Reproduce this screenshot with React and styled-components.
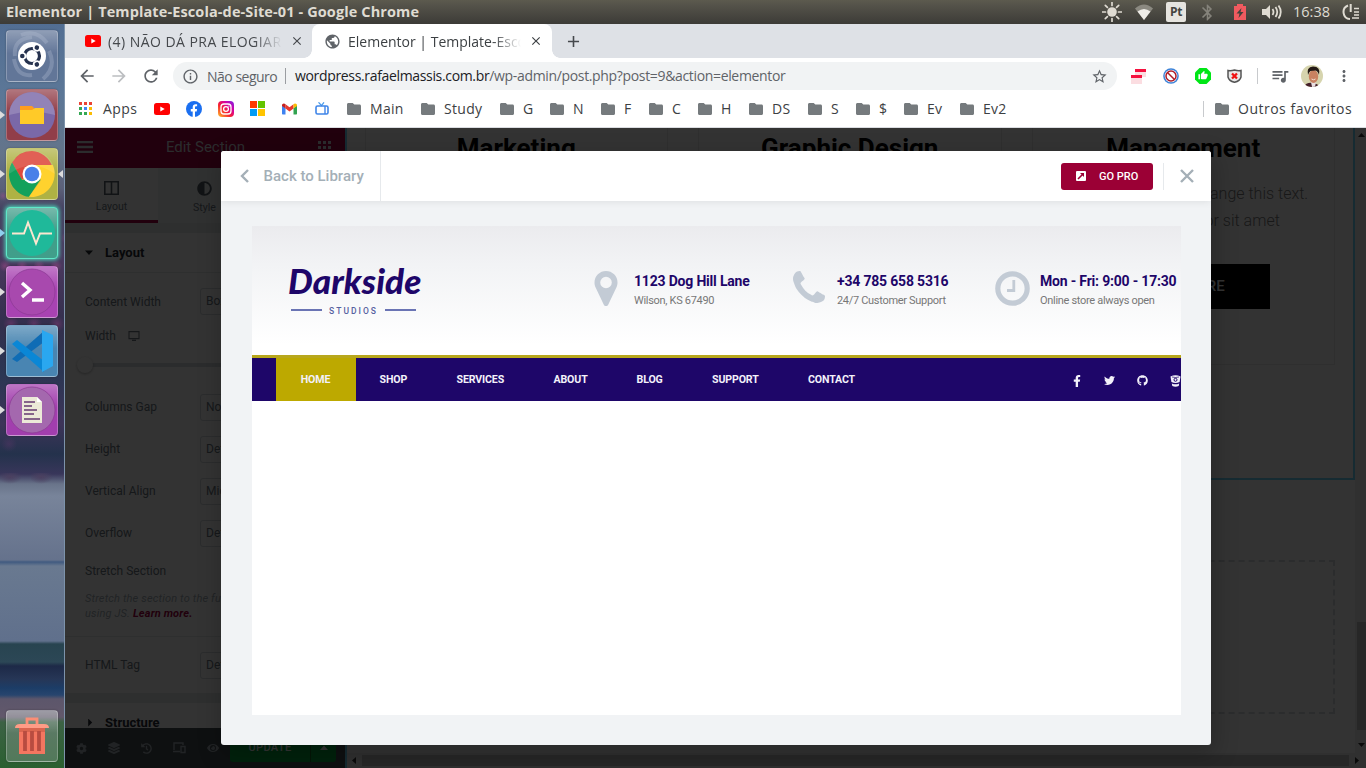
import React from "react";
import styled, { createGlobalStyle, css } from "styled-components";
import {
  MdArrowBack, MdArrowForward, MdRefresh, MdInfoOutline, MdStarBorder,
  MdClose, MdAdd, MdMoreVert, MdPublic, MdQueueMusic, MdBluetooth, MdThumbUp,
} from "react-icons/md";
import { FaFacebookF, FaTwitter, FaLayerGroup, FaCog, FaHistory, FaEye, FaAdjust, FaGithub } from "react-icons/fa";

const Global = createGlobalStyle`
  * { box-sizing: border-box; }
  html, body { margin: 0; padding: 0; overflow: hidden; }
  svg { display: block; flex: none; }
`;

const ui = `"Open Sans", "Noto Sans", sans-serif`;
const roboto = `Roboto, "Liberation Sans", sans-serif`;

const Desktop = styled.div`
  width: 1366px;
  height: 768px;
  display: flex;
  flex-direction: column;
  overflow: hidden;
  font-family: ${ui};
  white-space: nowrap;
`;

/* ---------- system bar ---------- */
const SystemBar = styled.header`
  height: 24px;
  flex: none;
  display: flex;
  align-items: center;
  padding: 0 5px 0 6px;
  background: linear-gradient(#5c5a4e, #55534a 20%, #3c3b37);
  color: #dfdbd2;
`;
const WindowTitle = styled.div`
  flex: 1;
  font-weight: 700;
  font-size: 14.5px;
  letter-spacing: 0.11px;
  line-height: 22px;
`;
const Indicator = styled.div`
  width: ${(p) => p.$w}px;
  display: flex;
  align-items: center;
  font-size: 14.5px;
  line-height: 22px;
`;
const KeyboardBadge = styled.span`
  width: 20px;
  height: 20px;
  border-radius: 2px;
  background: #e6e4df;
  color: #45443f;
  font: 700 12px/20px ${ui};
  letter-spacing: -0.4px;
  text-align: center;
`;

/* ---------- launcher ---------- */
const Body = styled.div`
  flex: 1;
  min-height: 0;
  display: flex;
`;
const Launcher = styled.nav`
  width: 65px;
  flex: none;
  display: flex;
  flex-direction: column;
  gap: 7px;
  padding: 6px 0 6px;
  border-right: 1px solid #7d93ab;
  background:
    radial-gradient(circle at 3px 4px, rgba(150, 80, 140, 0.55), transparent 5px) 0 168px / 13px 60px repeat-x,
    radial-gradient(circle at 6px 9px, rgba(150, 70, 130, 0.5), transparent 6px) 4px 205px / 19px 90px repeat-x,
    radial-gradient(circle at 5px 6px, rgba(165, 75, 140, 0.5), transparent 6px) 0 236px / 17px 60px repeat-x,
    radial-gradient(circle at 8px 8px, rgba(140, 60, 125, 0.45), transparent 8px) 3px 292px / 23px 60px repeat-x,
    radial-gradient(circle at 8px 8px, rgba(30, 60, 60, 0.4), transparent 8px) 5px 322px / 29px 60px repeat-x,
    radial-gradient(circle at 8px 8px, rgba(100, 55, 110, 0.35), transparent 8px) 1px 412px / 27px 60px no-repeat,
    radial-gradient(ellipse at 10px 4px, #4b4060, transparent 12px) 0 449px / 31px 16px repeat-x,
    linear-gradient(#526e93 0, #5c7797 70px, #64748a 130px, #5b6078 165px, #454261 185px, #49385e 240px,
      #332f4d 300px, #2b3653 350px, #3d3459 400px, #24324c 430px, #38365a 450px, #69748a 460px, #78849a 472px,
      #65728c 536px, #405a80 538px, #697990 542px, #60708c 617px, #284450 620px, #2c4756 638px, #1d2947 642px,
      #263656 655px, #1c3d67 664px, #27456e 671px, #5c566b 675px, #62586b 693px, #3c6245 698px, #2a6030 744px);
`;
const LauncherRow = styled.div`
  height: 52px;
  display: flex;
  align-items: center;
  ${(p) => p.$end && css`margin-top: auto;`}
`;
const Pip = styled.i`
  width: 5px;
  margin-right: 1px;
  height: 8px;
  flex: none;
  background: ${(p) => p.$color || "transparent"};
  clip-path: ${(p) => (p.$left ? "polygon(100% 0, 100% 100%, 0 50%)" : "polygon(0 0, 100% 50%, 0 100%)")};
`;
const LauncherTile = styled.div`
  width: 52px;
  height: 52px;
  flex: none;
  border-radius: 4px;
  border: 1px solid ${(p) => p.$edge || "rgba(255,255,255,.25)"};
  display: flex;
  align-items: center;
  justify-content: center;
  background: linear-gradient(rgba(255, 255, 255, 0.3), rgba(255, 255, 255, 0.02) 45%), ${(p) => p.$bg};
  box-shadow: ${(p) => (p.$glow ? "0 0 4px 1px #4fe0c0" : "0 0 2px rgba(0,0,0,.3)")};
  overflow: hidden;
`;

/* ---------- browser chrome ---------- */
const Browser = styled.main`
  flex: 1;
  min-width: 0;
  display: flex;
  flex-direction: column;
  background: #fff;
`;
const TabStrip = styled.div`
  height: 34px;
  flex: none;
  display: flex;
  background: #dee1e6;
  color: #45484c;
`;
const Tab = styled.div`
  width: ${(p) => p.$w}px;
  display: flex;
  align-items: center;
  padding-left: ${(p) => p.$pad}px;
  font-size: 14px;
  letter-spacing: ${(p) => p.$ls || 0}px;
  ${(p) =>
    p.$active &&
    css`
      position: relative;
      background: #fff;
      border-radius: 8px 8px 0 0;
      color: #3c4043;
      &::before,
      &::after {
        content: "";
        position: absolute;
        bottom: 0;
        width: 8px;
        height: 8px;
      }
      &::before {
        left: -8px;
        background: radial-gradient(circle at 0 0, transparent 7.5px, #fff 8px);
      }
      &::after {
        right: -8px;
        background: radial-gradient(circle at 100% 0, transparent 7.5px, #fff 8px);
      }
    `}
`;
const TabTitle = styled.span`
  width: ${(p) => p.$w}px;
  margin: 0 8px 0 7px;
  overflow: hidden;
  mask-image: linear-gradient(90deg, #000 calc(100% - 28px), transparent);
`;
const NewTab = styled.div`
  display: flex;
  align-items: center;
  padding-left: 12px;
`;
const Toolbar = styled.div`
  height: 36px;
  flex: none;
  display: flex;
  align-items: center;
  padding-left: 12px;
  color: #5f6368;
`;
const Slot = styled.span`
  width: ${(p) => p.$w}px;
  flex: none;
  display: flex;
  align-items: center;
  color: ${(p) => p.$color || "inherit"};
`;
const AddressBar = styled.div`
  width: 944px;
  height: 28px;
  margin-right: 14px;
  flex: none;
  display: flex;
  align-items: center;
  padding: 0 9px;
  border-radius: 14px;
  background: #f1f3f4;
  font-size: 14px;
`;
const Insecure = styled.span`
  width: 78px;
  margin-left: 8px;
  letter-spacing: -0.5px;
`;
const Url = styled.span`
  flex: 1;
  padding-left: 9px;
  line-height: 16px;
  border-left: 1px solid #9a9da1;
  letter-spacing: -0.34px;
  b { font-weight: 400; color: #202124; }
`;
const Divider = styled.i`
  width: 1px;
  height: 16px;
  flex: none;
  background: #c8cacd;
`;
const Bookmarks = styled.div`
  height: 34px;
  flex: none;
  display: flex;
  align-items: center;
  padding: 0 0 4px 14px;
  border-bottom: 1px solid #dadce0;
  color: #3c4043;
  font-size: 14px;
`;
const Bookmark = styled.span`
  width: ${(p) => p.$w}px;
  flex: none;
  display: flex;
  align-items: center;
  gap: ${(p) => p.$gap ?? 7}px;
  letter-spacing: ${(p) => p.$ls || 0}px;
  svg { margin-left: ${(p) => p.$shift || 0}px; }
`;
const Spring = styled.span`
  flex: 1;
`;

/* ---------- page under the dialog ---------- */
const Page = styled.div`
  position: relative;
  height: 640px;
  flex: none;
  display: flex;
  font-family: ${roboto};
  overflow: hidden;
`;
const Panel = styled.aside`
  width: 280px;
  flex: none;
  display: flex;
  flex-direction: column;
  background: #fff;
  font-size: 12px;
  color: #6d7882;
`;
const PanelHeader = styled.div`
  height: 40px;
  flex: none;
  display: flex;
  align-items: center;
  justify-content: space-between;
  padding: 0 14px 2px 12px;
  background: #a50040;
  color: #d5dadf;
  font-size: 15px;
`;
const PanelTabs = styled.div`
  height: 55px;
  flex: none;
  display: flex;
  background: #f1f3f5;
`;
const PanelTab = styled.div`
  width: 93px;
  display: flex;
  flex-direction: column;
  align-items: center;
  justify-content: center;
  gap: 5px;
  padding-top: 6px;
  font-size: 10.5px;
  background: ${(p) => (p.$active ? "#fff" : "#f1f3f5")};
  border-bottom: ${(p) => (p.$active ? "3px solid #a50040" : "3px solid transparent")};
`;
const PanelBody = styled.div`
  flex: 1;
  min-height: 0;
  display: flex;
  flex-direction: column;
  overflow: hidden;
`;
const Band = styled.div`
  height: 10px;
  flex: none;
  background: #e6e9ec;
`;
const SectionTitle = styled.div`
  height: 40px;
  flex: none;
  display: flex;
  align-items: center;
  padding-left: 20px;
  gap: 13px;
  font-weight: 700;
  font-size: 13px;
  color: #262c33;
  border-bottom: 1px solid #e6e9ec;
`;
const Triangle = styled.i`
  width: 8px;
  height: 8px;
  margin-right: -1px;
  background: currentColor;
  clip-path: ${(p) => (p.$right ? "polygon(40% 0, 90% 50%, 40% 100%)" : "polygon(0 25%, 100% 25%, 50% 80%)")};
`;
const Control = styled.div`
  height: ${(p) => p.$h}px;
  flex: none;
  display: flex;
  align-items: center;
  padding-left: 20px;
  gap: ${(p) => p.$gap || 0}px;
`;
const ControlLabel = styled.span`
  width: ${(p) => p.$w || 115}px;
`;
const Select = styled.span`
  width: 125px;
  height: 27px;
  padding-left: 5px;
  line-height: 25px;
  border: 1px solid #d5dadf;
  border-radius: 3px;
`;
const SliderTrack = styled.div`
  height: 4px;
  margin: 21px 20px 19px;
  flex: none;
  display: flex;
  align-items: center;
  background: #d5dadf;
  &::before {
    content: "";
    width: 16px;
    height: 16px;
    margin-left: -8px;
    border-radius: 50%;
    background: #fff;
    box-shadow: 0 1px 3px rgba(0, 0, 0, 0.3);
  }
`;
const Hint = styled.div`
  height: 49px;
  flex: none;
  padding: 3px 0 0 20px;
  font: italic 11px/15px ${roboto};
  letter-spacing: 0.16px;
  color: #a4afb7;
  border-bottom: 1px solid #e6e9ec;
  b { color: #a50040; }
`;
const PanelFooter = styled.div`
  height: 40px;
  flex: none;
  display: flex;
  align-items: center;
  gap: 21px;
  padding-left: 11px;
  background: #495157;
  color: #a4afb7;
`;
const UpdateButton = styled.div`
  width: 106px;
  height: 28px;
  margin-left: -10px;
  display: flex;
  align-items: center;
  border-radius: 3px;
  background: #00aa3c;
  color: #fff;
  font-weight: 500;
  font-size: 11px;
  span { width: 81px; text-align: center; border-right: 1px solid #146b22; line-height: 28px; letter-spacing: 0.4px; }
  i { margin-left: 9px; transform: scaleY(-1); }
`;
const Canvas = styled.div`
  flex: 1;
  min-width: 0;
  display: flex;
  flex-direction: column;
  border-left: 2px solid #71d7f7;
  background: #fff;
`;
const Section = styled.section`
  width: 1008px;
  height: 352px;
  flex: none;
  display: flex;
  gap: 30px;
  padding-left: 17.5px;
  border: solid #71d7f7;
  border-width: 0 2px 2px 0;
`;
const Card = styled.article`
  width: 303.5px;
  height: 237px;
  flex: none;
  display: flex;
  flex-direction: column;
  align-items: center;
  padding-top: 3px;
  border: 1px solid #e9e9e9;
  border-top: 0;
  color: #7a7a7a;
  font-weight: 300;
  font-size: 16px;
  line-height: 27px;
  h2 { margin: 0 0 14px; font: 700 26px/35px ${roboto}; color: #000; }
  p { margin: 0; }
`;
const ReadMore = styled.span`
  width: 174px;
  height: 45px;
  margin-top: 30px;
  background: #000;
  color: #fff;
  font: 500 15px/45px ${roboto};
  text-align: center;
`;
const DropArea = styled.div`
  width: 970px;
  height: 154px;
  margin: 80px 0 0 18px;
  border: 2px dashed #d5dadf;
`;
const CanvasRow = styled.div`
  flex: 1;
  display: flex;
`;
const VScroll = styled.div`
  width: 11px;
  flex: none;
  display: flex;
  flex-direction: column;
  align-items: center;
  padding: 5px 0 6px 2px;
  background: #efefef;
`;
const VThumb = styled.i`
  width: 9px;
  height: 108px;
  margin: auto 0 13px;
  background: #c4c4c4;
`;
const HScroll = styled.div`
  height: 15px;
  flex: none;
  display: flex;
  align-items: center;
  gap: 4px;
  padding: 0 3px;
  background: #efefef;
`;
const HThumb = styled.i`
  width: 987px;
  height: 11px;
  background: #c4c4c4;
`;
const Arrow = styled.i`
  width: ${(p) => (p.$dir === "up" || p.$dir === "down" ? 7 : 4)}px;
  height: ${(p) => (p.$dir === "up" || p.$dir === "down" ? 4 : 7)}px;
  margin: 0 2px;
  background: #333;
  clip-path: ${(p) =>
    ({
      up: "polygon(50% 0, 100% 100%, 0 100%)",
      down: "polygon(0 0, 100% 0, 50% 100%)",
      left: "polygon(100% 0, 100% 100%, 0 50%)",
      right: "polygon(0 0, 100% 50%, 0 100%)",
    })[p.$dir]};
`;

/* ---------- library dialog ---------- */
const Overlay = styled.div`
  position: absolute;
  inset: 0;
  padding: 23px 0 0 156px;
  background: rgba(0, 0, 0, 0.8);
`;
const Dialog = styled.div`
  width: 990px;
  height: 594px;
  display: flex;
  flex-direction: column;
  border-radius: 3px;
  background: #f1f3f5;
  box-shadow: 2px 8px 23px 3px rgba(0, 0, 0, 0.2);
  overflow: hidden;
`;
const DialogHeader = styled.div`
  height: 50px;
  flex: none;
  display: flex;
  align-items: center;
  background: #fff;
  box-shadow: 0 0 8px rgba(0, 0, 0, 0.1);
  z-index: 1;
  color: #a4afb7;
`;
const BackLink = styled.div`
  width: 160px;
  height: 50px;
  display: flex;
  align-items: center;
  padding-left: 19px;
  gap: 13.5px;
  border-right: 1px solid #e6e9ec;
  font-weight: 500;
  font-size: 15px;
`;
const GoPro = styled.div`
  width: 92px;
  height: 27px;
  display: flex;
  align-items: center;
  gap: 13px;
  padding-left: 15px;
  border-radius: 3px;
  background: #9b0035;
  color: #fff;
  font-weight: 500;
  font-size: 11px;
`;
const CloseCell = styled.div`
  width: 48px;
  height: 27px;
  margin-left: 10px;
  padding-left: 16px;
  display: flex;
  align-items: center;
  border-left: 1px solid #e6e9ec;
`;
const Preview = styled.div`
  width: 929px;
  height: 489px;
  margin: 25px 0 0 31px;
  background: #fff;
  overflow: hidden;
`;
const SiteHeader = styled.div`
  height: 129px;
  display: flex;
  background: linear-gradient(#ebebee, #f2f3f5 30%, #fff 92%);
`;
const Logo = styled.div`
  width: 342px;
  flex: none;
  padding: 33px 0 0 36px;
  color: #1e0669;
`;
const LogoName = styled.div`
  font: italic 900 35px/42px Lato, ${roboto};
  letter-spacing: 0.1px;
`;
const LogoTag = styled.div`
  width: 125px;
  margin: 4px 0 0 3px;
  display: flex;
  align-items: center;
  justify-content: space-between;
  font: 500 8.5px/12px ${roboto};
  letter-spacing: 2px;
  color: #5560a0;
  &::before,
  &::after {
    content: "";
    width: 31px;
    height: 2px;
    margin-bottom: 3px;
    background: #6a74b4;
  }
`;
const Contact = styled.div`
  display: flex;
  flex: none;
  width: ${(p) => p.$w}px;
  padding-top: 45px;
`;
const ContactIcon = styled.span`
  width: ${(p) => p.$w}px;
  flex: none;
`;
const ContactText = styled.div`
  margin-top: 1px;
  font-size: 11px;
  line-height: 19px;
  letter-spacing: -0.31px;
  color: #777;
  strong { display: block; font-size: 14px; line-height: 19px; letter-spacing: -0.19px; color: #1e0669; }
`;
const SiteNav = styled.div`
  height: 46px;
  display: flex;
  align-items: center;
  padding-left: 23.5px;
  border-top: 3px solid #b8a71c;
  background: #1e0669;
  color: #f3f1fa;
  font-weight: 700;
  font-size: 10.6px;
`;
const NavItem = styled.span`
  width: ${(p) => p.$w}px;
  flex: none;
  height: 43px;
  line-height: 43px;
  letter-spacing: -0.13px;
  ${(p) => p.$active && css`background: #bda900; text-align: center; margin-right: 24px;`}
`;
const Socials = styled.div`
  margin: 2px -11px 0 auto;
  display: flex;
  align-items: center;
`;
const SocialLink = styled.span`
  width: 33px;
  display: flex;
  justify-content: center;
`;

/* ---------- drawings ---------- */
const Svg = ({ w, h = w, vb, children }) => (
  <svg width={w} height={h} viewBox={vb || `0 0 ${w} ${h}`} fill="none">{children}</svg>
);
const YouTube = () => (
  <Svg w={16} h={12}><rect width="16" height="12" rx="2.5" fill="#f00" /><path d="M6.3 3.6 10.7 6 6.3 8.4z" fill="#fff" /></Svg>
);
const AppsGrid = ({ colors, s = 13 }) => (
  <Svg w={s} vb="0 0 13 13">
    {[0, 1, 2].map((r) => [0, 1, 2].map((c) => <rect key={`${r}${c}`} x={c * 5} y={r * 5} width="3" height="3" fill={colors[r * 3 + c] || colors[0]} />))}
  </Svg>
);
const Facebook = () => (
  <Svg w={16}><circle cx="8" cy="8" r="8" fill="#1b6ff0" /><path d="M6.7 16v-5.6H4.8V8h1.9V6.2c0-2 1.1-3 2.9-3l1.5.1v2h-.9c-.9 0-1.2.5-1.2 1.1V8h2.1l-.4 2.4H9V16z" fill="#fff" /></Svg>
);
const Instagram = () => (
  <Svg w={16}>
    <defs><linearGradient id="ig" x1="0" y1="1" x2="1" y2="0"><stop stopColor="#ffc02e" /><stop offset=".4" stopColor="#f7222f" /><stop offset=".7" stopColor="#d300a5" /><stop offset="1" stopColor="#7a28e8" /></linearGradient></defs>
    <rect width="16" height="16" rx="4" fill="url(#ig)" /><rect x="3" y="3" width="10" height="10" rx="3" stroke="#fff" strokeWidth="1.3" /><circle cx="8" cy="8" r="2.4" stroke="#fff" strokeWidth="1.3" /><circle cx="10.9" cy="5.1" r=".7" fill="#fff" />
  </Svg>
);
const Microsoft = () => (
  <Svg w={15}><path d="M0 0h7v7H0z" fill="#ff3a00" /><path d="M8 0h7v7H8z" fill="#62c400" /><path d="M0 8h7v7H0z" fill="#009bf5" /><path d="M8 8h7v7H8z" fill="#ffc400" /></Svg>
);
const Gmail = () => (
  <Svg w={15} h={12}>
    <path d="M0 2.5 3.5 5v6.500H1c-.6 0-1-.4-1-1z" fill="#3e82f1" /><path d="M15 2.5 11.500 5v6.500H14c.6 0 1-.4 1-1z" fill="#31a350" />
    <path d="M3.500 1.200 7.500 4.300l4-3.100v4.300l-4 3-4-3z" fill="#e8382d" />
    <path d="M11.500 1.200C13 0 15 .6 15 2.500V3l-3.500 2.500z" fill="#fbbc04" /><path d="M3.500 1.200C2 0 0 .6 0 2.500V3l3.500 2.500z" fill="#c5221f" />
  </Svg>
);
const TvIcon = () => (
  <Svg w={14} h={13}><path d="M3.500.3 6.500 3.500 9 .3" stroke="#4a9bea" strokeWidth="1.2" /><rect x="1" y="4" width="12" height="8" rx="1.500" stroke="#3f85e8" strokeWidth="1.600" /><path d="M10 4v8" stroke="#3f85e8" strokeWidth="1.400" /></Svg>
);
const Sun = () => (
  <Svg w={20}><circle cx="10" cy="10" r="4.800" fill="#dfdbd2" />{[0, 45, 90, 135, 180, 225, 270, 315].map((a) => <path key={a} d="M10 .5v3" stroke="#dfdbd2" strokeWidth="1.700" strokeLinecap="round" transform={`rotate(${a} 10 10)`} />)}</Svg>
);
const Wifi = () => (
  <Svg w={18} h={16}><path d="M9 16 0 4.500Q9-3.500 18 4.500z" fill="#8b8981" /><path d="M9 16 2.500 7.500q6.500-5 13 0z" fill="#efede8" /></Svg>
);
const Battery = () => (
  <Svg w={12} h={16}><path d="M3 0h6v2h3v14H0V2h3z" fill="#f05a5f" /><path d="M7.500 4 2.500 9.500h3L4.500 14 9.500 8h-3z" fill="#43423c" /></Svg>
);
const Volume = () => (
  <Svg w={20} h={16}><path d="M0 5h4l4-4v14l-4-4H0z" fill="#dfdbd2" /><path d="M10.500 5q2 3 0 6M13.500 3q3.500 5 0 10M16.500 1.500q4.500 6.500 0 13" stroke="#dfdbd2" strokeWidth="1.800" /></Svg>
);
const Session = () => (
  <Svg w={18} h={16}><path d="M6 1.500A7 7 0 0 0 8 15" stroke="#dfdbd2" strokeWidth="2" /><path d="M8.700 0v8" stroke="#dfdbd2" strokeWidth="2" /><path d="M12 4.500h5M12 8h5M12 11h5M10 14h7" stroke="#dfdbd2" strokeWidth="1.700" /></Svg>
);
const PhoneIcon = () => (
  <Svg w={32} vb="192 128 1408 1408"><path fill="#c3cbd5" d="M1600 1240q0 27-10 70.500t-21 68.500q-21 50-122 106-94 51-186 51-27 0-53-3.500t-57.500-12.500-47-14.500-55.500-20.500-49-18q-98-35-175-83-127-79-264-216t-216-264q-48-77-83-175-3-9-18-49t-20.500-55.500-14.500-47-12.500-57.500-3.500-53q0-92 51-186 56-101 106-122 25-11 68.500-21t70.500-10q14 0 21 3 18 6 53 76 11 19 30 54t35 63.500 31 53.500q3 4 17.500 25t21.500 35.500 7 28.500q0 20-28.500 50t-62 55-62 53-28.500 46q0 9 5 22.500t8.500 20.500 14 24 11.500 19q76 137 174 235t235 174q2 1 19 11.500t24 14 20.500 8.500 22.500 5q18 0 46-28.500t53-62 55-62 50-28.500q14 0 28.500 7t35.500 21.500 25 17.500q25 15 53.500 31t63.500 35 54 30q70 35 76 53 3 7 3 21z" /></Svg>
);
const PinIcon = () => (
  <Svg w={24} h={35}><path fillRule="evenodd" fill="#c3cbd5" d="M12 0a11.500 11.500 0 0 1 11.500 11.500c0 2-.4 3.300-1 4.700L14.300 33.500c-.9 2-3.700 2-4.600 0L1.500 16.200c-.6-1.400-1-2.700-1-4.700A11.500 11.500 0 0 1 12 0zm0 5.700a5.800 5.800 0 1 0 0 11.600 5.800 5.800 0 0 0 0-11.600z" /></Svg>
);
const ClockIcon = () => (
  <Svg w={35}><circle cx="17.500" cy="17.500" r="14.700" stroke="#c3cbd5" strokeWidth="5.200" /><path d="M18.800 9v10.500H12" stroke="#c3cbd5" strokeWidth="2.800" /></Svg>
);
const Bitbucket = () => (
  <Svg w={11} h={12}><path d="M.5 1.500Q5.500-.8 10.500 1.500L9.600 7q-4 2-8.200 0z" fill="#f3f1fa" /><path d="M1.800 8.500q3.700 1.700 7.400 0l-.5 2.500q-3.200 1.500-6.400 0z" fill="#f3f1fa" /><circle cx="5.500" cy="4.800" r="1.500" stroke="#1e0669" /><path d="M2 2q3.500 1 7 0" stroke="#1e0669" strokeWidth=".7" /></Svg>
);
const GoProIcon = () => (
  <Svg w={10}><rect width="10" height="10" rx="1" fill="#fff" /><path d="M2 8 6.500 3.500" stroke="#9b0035" strokeWidth="1.600" /><path d="M4 2h4v4z" fill="#9b0035" /></Svg>
);
const ExtBars = () => (
  <Svg w={15}><path d="M4 1h11v7H4z M0 7h11v8H0z" fill="#fbdde1" /><path d="M4 0h11v3H4zM0 6h11v3H0z" fill="#f5123f" /></Svg>
);
const ExtBlock = () => (
  <Svg w={16}><circle cx="8" cy="8" r="7.800" fill="#3d83d8" /><circle cx="8" cy="8" r="6.300" fill="#fff" /><circle cx="8" cy="8" r="5" stroke="#b01d28" strokeWidth="1.500" /><path d="m4.500 4.500 7 7" stroke="#b01d28" strokeWidth="1.500" /></Svg>
);
const ExtThumb = () => (
  <Svg w={16}><path d="M4.500 0h7L16 4.500v7L11.500 16h-7L0 11.500v-7z" fill="#00e616" /><g transform="translate(3 2.500) scale(.42)"><MdThumbUp size={24} color="#fff" /></g></Svg>
);
const ExtShield = () => (
  <Svg w={15} h={14}><path d="M1 1.500Q4 2 7.500 1 11 2 14 1.500V8q-1 4-6.500 5.300Q2 12 1 8z" fill="#e7e7e7" stroke="#555" strokeWidth="1.500" /><path d="m5 4.500 5 5m0-5-5 5" stroke="#f01414" strokeWidth="2.300" /></Svg>
);
const Avatar = () => (
  <Svg w={22}>
    <defs><clipPath id="av"><circle cx="11" cy="11" r="11" /></clipPath></defs>
    <g clipPath="url(#av)"><path d="M0 0h22v22H0z" fill="#d6d4ae" /><path d="M3 22q2-5 9-4 6 1 6 4z" fill="#45202a" /><path d="M10 17h5l-1 5h-3z" fill="#e9dfe0" /><ellipse cx="12.500" cy="11.500" rx="4.700" ry="6.500" fill="#c98261" /><path d="M7 10Q5 2 12 1.500 20 1.500 18 10 17 6 14.500 5.500L9.500 6Q8 7 7 10z" fill="#231815" /><path d="M10.500 14q2 1.500 4 0" stroke="#f4dcd0" /></g>
  </Svg>
);
const Hamburger = () => <Svg w={16} h={12}><path d="M0 1.200h16M0 6h16M0 10.800h16" stroke="#d5dadf" strokeWidth="2.300" /></Svg>;
const ColumnsIcon = () => <Svg w={15} h={14}><path d="M.8.8h13.400v12.400H.8zM7.500 1v12" stroke="#556068" strokeWidth="1.600" /></Svg>;
const Monitor = () => <Svg w={12} h={10}><path d="M1 .6h10v7H1zM4 9.400h4" stroke="#6d7882" strokeWidth="1.100" /></Svg>;
const Devices = () => <Svg w={13} h={12}><path d="M1 8V1h9v2M0 9.500h7M8 4.500h4v6H8z" stroke="#a4afb7" strokeWidth="1.400" /></Svg>;
const BackChevron = () => <Svg w={10} h={14}><path d="M8 1 2 7l6 6" stroke="#a4afb7" strokeWidth="2.400" /></Svg>;
const CloseX = () => <Svg w={14}><path d="m1 1 12 12M13 1 1 13" stroke="#a4afb7" strokeWidth="2.400" /></Svg>;

const UbuntuLogo = () => (
  <Svg w={50}>
    <path d="M8 25Q6 8 25 6M25 44Q10 46 7 28M42 20Q50 36 36 48M14 4Q30-2 40 12" stroke="#b9c3d8" strokeOpacity=".3" strokeWidth="4" />
    <circle cx="25" cy="25" r="14" fill="#fff" /><circle cx="25" cy="25" r="7.500" stroke="#26324e" strokeWidth="3.200" />
    {[60, 180, 300].map((a) => <g key={a} transform={`rotate(${a} 25 25)`}><circle cx="34.500" cy="25" r="3.800" fill="#fff" /><circle cx="34.700" cy="25" r="2.300" fill="#26324e" /></g>)}
  </Svg>
);
const Files = () => (
  <Svg w={50}><circle cx="25" cy="25" r="23" fill="#7a68a8" /><path d="M2 25A23 23 0 0 1 48 25Q25 18 2 25z" fill="#fff" opacity=".18" /><path d="M13 16h12l2 2v4H13z" fill="#ff9d20" /><path d="M13 20h12l3-2h9v16H13z" fill="#ffca28" /></Svg>
);
const Chrome = () => (
  <Svg w={50}>
    <path d="M25 2A23 23 0 0 0 5.100 13.500L15 31l10-14h20A23 23 0 0 0 25 2z" fill="#dd4b3e" />
    <path d="M5.100 13.500A23 23 0 0 0 22 47.800L33 31l-18 0z" fill="#12a15c" /><path d="M22 47.800A23 23 0 0 0 45.800 16H25l9 15z" fill="#ffd22e" />
    <circle cx="25" cy="25" r="9.500" fill="#fff" /><circle cx="25" cy="25" r="7.300" fill="#4a80e8" />
    <path d="M2 25A23 23 0 0 1 48 25Q25 8 2 25z" fill="#fff" opacity=".12" />
  </Svg>
);
const Pulse = () => (
  <Svg w={50}><circle cx="25" cy="25" r="23" fill="#1fb99a" /><path d="M5 25.500h12l4-11 8 21 4-10h12" stroke="#fbe6cf" strokeWidth="2" /></Svg>
);
const Terminal = () => (
  <Svg w={50}><circle cx="25" cy="25" r="23" fill="#a849ae" stroke="#8b3b93" strokeWidth=".7" /><path d="m15 16 8 7-8 7" stroke="#fff" strokeWidth="3.400" /><path d="M25 33h12" stroke="#fff" strokeWidth="3.600" /></Svg>
);
const Code = () => (
  <Svg w={50}><path d="m5 33 32-28v11L10 36z" fill="#0f6cb5" /><path d="m5 18 5-4 27 21v11z" fill="#0a87d6" /><path d="M35 4l11 5v31l-11 6z" fill="#2aa7f0" /></Svg>
);
const Doc = () => (
  <Svg w={50}><circle cx="25" cy="25" r="23" fill="#a468ae" stroke="#8b3b93" strokeWidth=".7" /><path d="M15 12h15l5 5v21H15z" fill="#ecead8" /><path d="M30 12v5h5z" fill="#fff" /><path d="M17 17h11M17 21h8M17 25h13M17 29h10M17 34h16" stroke="#86658a" strokeWidth="2" /></Svg>
);
const Trash = () => (
  <Svg w={50}><path d="M20 13V8h10v5" stroke="#fb8e76" strokeWidth="2.800" /><path d="M8 17q0-4 5-4h24q5 0 5 4z" fill="#ff9c86" /><path d="M12 17h26v26H12z" fill="#f47660" /><path d="M12 17h26v4H12z" fill="#d9654f" /><path d="M18 20v20M25 20v20M32 20v20" stroke="#b84c40" strokeWidth="3.800" /></Svg>
);
const FolderIcon = () => (
  <Svg w={14} h={12}><path d="M1.500 0h4.200l1.600 1.500h5.200c.9 0 1.500.6 1.500 1.500v7.500c0 .9-.6 1.500-1.500 1.500h-11C.6 12 0 11.400 0 10.500v-9C0 .6.600 0 1.500 0z" fill="#757a7d" /></Svg>
);

const launcherItems = [
  { icon: <UbuntuLogo />, bg: "#5f7396" },
  { icon: <Files />, bg: "#8f3a45", pip: "#ddd" },
  { icon: <Chrome />, bg: "#adb040", pip: "#ddd", right: true },
  { icon: <Pulse />, bg: "#3d9c88", pip: "#8fd0ee", edge: "#5fe8c8", glow: true },
  { icon: <Terminal />, bg: "#a63fb0", pip: "#ddd" },
  { icon: <Code />, bg: "#4583b0", pip: "#ddd" },
  { icon: <Doc />, bg: "#a03aac", pip: "#ddd" },
];

const folders = [
  ["Main", 74], ["Study", 79], ["G", 50], ["N", 51], ["F", 48], ["C", 49], ["H", 51],
  ["DS", 59], ["S", 48], ["$", 48], ["Ev", 56], ["Ev2", 60],
];

const contacts = [
  { icon: <PinIcon />, iconWidth: 40, width: 199, title: "1123 Dog Hill Lane", note: "Wilson, KS 67490" },
  { icon: <PhoneIcon />, iconWidth: 44, width: 202, title: "+34 785 658 5316", note: "24/7 Customer Support" },
  { icon: <ClockIcon />, iconWidth: 45, width: 186, title: "Mon - Fri: 9:00 - 17:30", note: "Online store always open" },
];

const siteLinks = [["SHOP", 77], ["SERVICES", 97], ["ABOUT", 83], ["BLOG", 75.5], ["SUPPORT", 96], ["CONTACT", 60]];

export default function App() {
  return (
    <Desktop>
      <Global />
      <SystemBar>
        <WindowTitle>Elementor | Template-Escola-de-Site-01 - Google Chrome</WindowTitle>
        <Indicator $w={33}><Sun /></Indicator>
        <Indicator $w={31}><Wifi /></Indicator>
        <Indicator $w={32}><KeyboardBadge>Pt</KeyboardBadge></Indicator>
        <Indicator $w={36}><MdBluetooth size={19} color="#85837b" /></Indicator>
        <Indicator $w={28}><Battery /></Indicator>
        <Indicator $w={31}><Volume /></Indicator>
        <Indicator $w={49}>16:38</Indicator>
        <Indicator $w={19}><Session /></Indicator>
      </SystemBar>
      <Body>
        <Launcher>
          {launcherItems.map((it, i) => (
            <LauncherRow key={i}>
              <Pip $color={it.pip} />
              <LauncherTile $bg={it.bg} $edge={it.edge} $glow={it.glow}>{it.icon}</LauncherTile>
              {it.right && <Pip $color="#ddd" $left />}
            </LauncherRow>
          ))}
          <LauncherRow $end>
            <Pip />
            <LauncherTile $bg="rgba(160,170,170,.3)"><Trash /></LauncherTile>
          </LauncherRow>
        </Launcher>
        <Browser>
          <TabStrip>
            <Tab $w={247} $pad={20} $ls={0.45}>
              <YouTube />
              <TabTitle $w={174}>(4) NÃO DÁ PRA ELOGIAR</TabTitle>
              <MdClose size={14} />
            </Tab>
            <Tab $w={240} $pad={12} $active>
              <MdPublic size={17} color="#5f6368" />
              <TabTitle $w={173}>Elementor | Template-Escola</TabTitle>
              <MdClose size={14} />
            </Tab>
            <NewTab><MdAdd size={19} /></NewTab>
          </TabStrip>
          <Toolbar>
            <Slot $w={32}><MdArrowBack size={20} /></Slot>
            <Slot $w={32} $color="#bcbec1"><MdArrowForward size={20} /></Slot>
            <Slot $w={32}><MdRefresh size={20} /></Slot>
            <AddressBar>
              <MdInfoOutline size={17} />
              <Insecure>Não seguro</Insecure>
              <Url><b>wordpress.rafaelmassis.com.br</b>/wp-admin/post.php?post=9&amp;action=elementor</Url>
              <MdStarBorder size={17} />
            </AddressBar>
            <Slot $w={32}><ExtBars /></Slot>
            <Slot $w={32}><ExtBlock /></Slot>
            <Slot $w={32}><ExtThumb /></Slot>
            <Slot $w={30}><ExtShield /></Slot>
            <Divider />
            <Slot $w={43}><Spring /><MdQueueMusic size={20} /><Spring /></Slot>
            <Slot $w={34}><Avatar /></Slot>
            <MdMoreVert size={18} />
          </Toolbar>
          <Bookmarks>
            <Bookmark $w={75} $gap={11} $ls={0.4}><AppsGrid colors={["#ea4335", "#ea4335", "#ea4335", "#34a853", "#4285f4", "#fbbc04", "#34a853", "#34a853", "#fbbc04"]} />Apps</Bookmark>
            <Bookmark $w={32}><YouTube /></Bookmark>
            <Bookmark $w={32}><Facebook /></Bookmark>
            <Bookmark $w={32}><Instagram /></Bookmark>
            <Bookmark $w={32}><Microsoft /></Bookmark>
            <Bookmark $w={33}><Gmail /></Bookmark>
            <Bookmark $w={32}><TvIcon /></Bookmark>
            {folders.map(([name, w]) => <Bookmark key={name} $w={w} $gap={9} $ls={0.3}><FolderIcon />{name}</Bookmark>)}
            <Spring />
            <Divider />
            <Bookmark $w={162} $gap={9} $shift={11} $ls={0.5}><FolderIcon />Outros favoritos</Bookmark>
          </Bookmarks>
          <Page>
            <Panel>
              <PanelHeader><Hamburger />Edit Section<AppsGrid colors={["#d5dadf"]} /></PanelHeader>
              <PanelTabs>
                <PanelTab $active><ColumnsIcon />Layout</PanelTab>
                <PanelTab><FaAdjust size={15} color="#556068" />Style</PanelTab>
                <PanelTab><FaCog size={15} />Advanced</PanelTab>
              </PanelTabs>
              <PanelBody>
                <Band />
                <SectionTitle><Triangle />Layout</SectionTitle>
                <Control $h={57}><ControlLabel>Content Width</ControlLabel><Select>Boxed</Select></Control>
                <Control $h={12} $gap={11}><ControlLabel $w={32}>Width</ControlLabel><Monitor /></Control>
                <SliderTrack />
                <Control $h={42}><ControlLabel>Columns Gap</ControlLabel><Select>No Gap</Select></Control>
                <Control $h={42}><ControlLabel>Height</ControlLabel><Select>Default</Select></Control>
                <Control $h={42}><ControlLabel>Vertical Align</ControlLabel><Select>Middle</Select></Control>
                <Control $h={42}><ControlLabel>Overflow</ControlLabel><Select>Default</Select></Control>
                <Control $h={34}><ControlLabel>Stretch Section</ControlLabel></Control>
                <Hint>Stretch the section to the full width of the page<br />using JS. <b>Learn more.</b></Hint>
                <Control $h={56}><ControlLabel>HTML Tag</ControlLabel><Select>Default</Select></Control>
                <Band />
                <SectionTitle><Triangle $right />Structure</SectionTitle>
              </PanelBody>
              <PanelFooter>
                <FaCog size={11} /><FaLayerGroup size={12} /><FaHistory size={11} /><Devices /><FaEye size={12} />
                <UpdateButton><span>UPDATE</span><Triangle /></UpdateButton>
              </PanelFooter>
            </Panel>
            <Canvas>
              <CanvasRow>
                <div>
                  <Section>
                    <Card><h2>Marketing</h2></Card>
                    <Card><h2>Graphic Design</h2></Card>
                    <Card>
                      <h2>Management</h2>
                      <p>Click edit button to change this text.</p>
                      <p>Lorem ipsum dolor sit amet</p>
                      <ReadMore>READ MORE</ReadMore>
                    </Card>
                  </Section>
                  <DropArea />
                </div>
                <VScroll><Arrow $dir="up" /><VThumb /><Arrow $dir="down" /></VScroll>
              </CanvasRow>
              <HScroll><Arrow $dir="left" /><HThumb /><Arrow $dir="right" /></HScroll>
            </Canvas>
            <Overlay>
              <Dialog>
                <DialogHeader>
                  <BackLink><BackChevron />Back to Library</BackLink>
                  <Spring />
                  <GoPro><GoProIcon />GO PRO</GoPro>
                  <CloseCell><CloseX /></CloseCell>
                </DialogHeader>
                <Preview>
                  <SiteHeader>
                    <Logo>
                      <LogoName>Darkside</LogoName>
                      <LogoTag>STUDIOS</LogoTag>
                    </Logo>
                    {contacts.map((c) => (
                      <Contact key={c.title} $w={c.width}>
                        <ContactIcon $w={c.iconWidth}>{c.icon}</ContactIcon>
                        <ContactText><strong>{c.title}</strong>{c.note}</ContactText>
                      </Contact>
                    ))}
                  </SiteHeader>
                  <SiteNav>
                    <NavItem $w={80} $active>HOME</NavItem>
                    {siteLinks.map(([label, w]) => <NavItem key={label} $w={w}>{label}</NavItem>)}
                    <Socials>
                      <SocialLink><FaFacebookF size={12} /></SocialLink>
                      <SocialLink><FaTwitter size={11} /></SocialLink>
                      <SocialLink><FaGithub size={11} /></SocialLink>
                      <SocialLink><Bitbucket /></SocialLink>
                    </Socials>
                  </SiteNav>
                </Preview>
              </Dialog>
            </Overlay>
          </Page>
        </Browser>
      </Body>
    </Desktop>
  );
}
